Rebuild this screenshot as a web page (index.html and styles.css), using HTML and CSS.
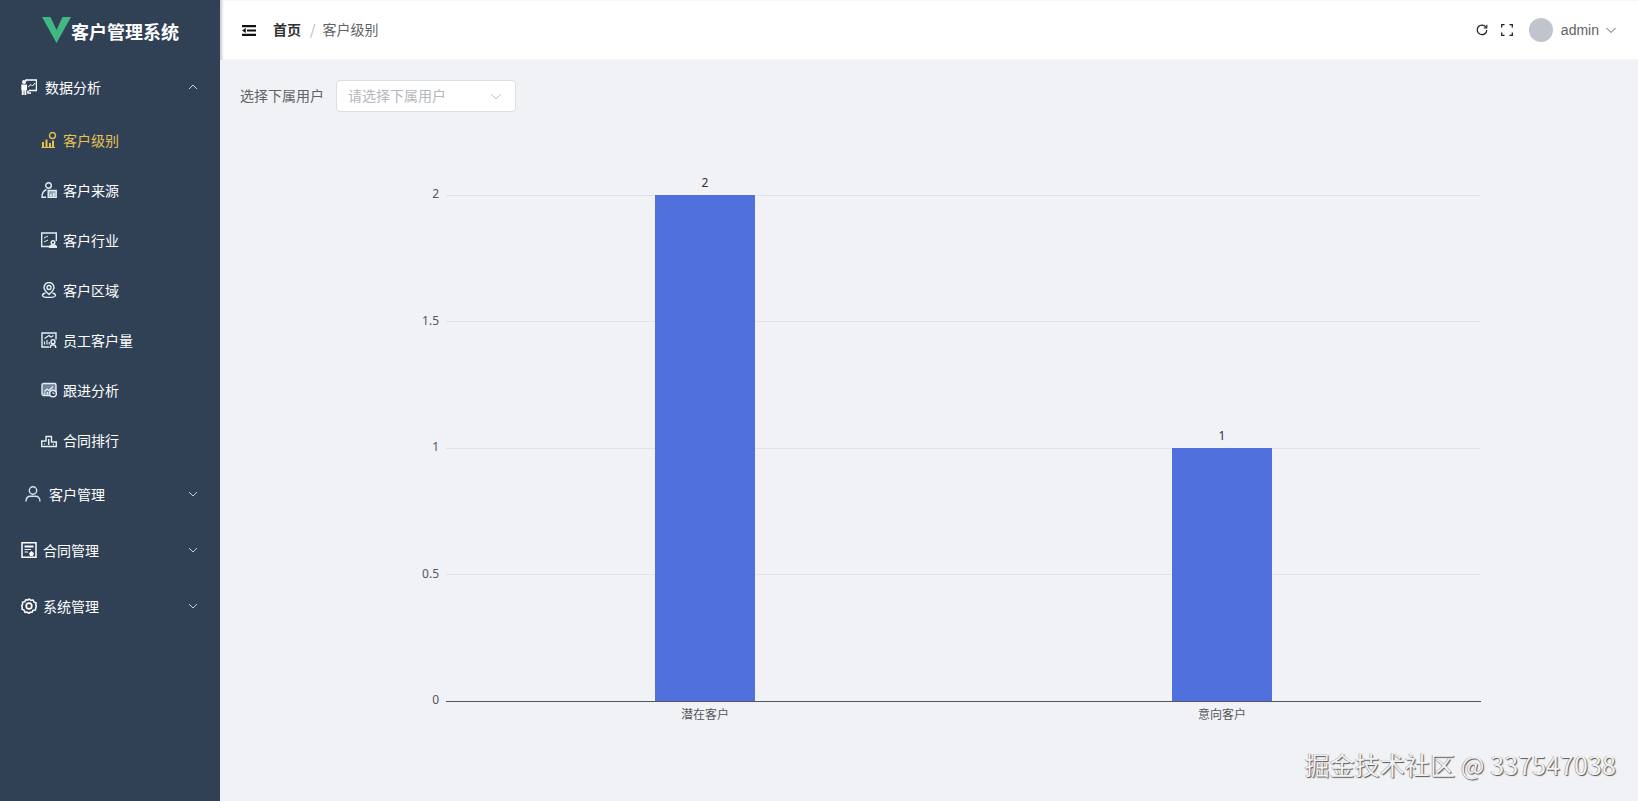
FILE: index.html
```html
<!DOCTYPE html>
<html lang="zh">
<head>
<meta charset="utf-8">
<title>客户级别</title>
<link rel="stylesheet" href="styles.css">
</head>
<body>
<div class="app">
  <aside class="sidebar">
    <div class="logo">
      <svg class="logo-mark" viewBox="0 0 29 26"><path d="M0 0H8.500L14.500 13 20.500 0H29L14.500 26Z" fill="#41b883"/></svg>
      <span class="logo-text">客户管理系统</span>
    </div>
    <nav class="menu">
      <div class="menu-row">
        <svg class="ico ico-lg" viewBox="0 0 16 16"><path d="M5 2.500V1H15.500V11.500H8M7 11.500V14H10" fill="none" stroke="#fff" stroke-width="1.500"/><path d="M7 8 10 5.500 11.500 7 14 4" fill="none" stroke="#fff" stroke-width="1"/><circle cx="3" cy="3" r="2" fill="#fff"/><path d="M.3 5.500H6V11H5.300V16.500H3.400V11.500H2.700V16.500H.8V11H.3Z" fill="#fff"/></svg>
        <span class="menu-label">数据分析</span>
        <svg class="chev" viewBox="0 0 12 12"><path d="M2 8 6 4 10 8"/></svg>
      </div>
      <div class="sub-row active">
        <svg class="ico" viewBox="0 0 16 16" fill="none" stroke="#e8c04f"><circle cx="11.500" cy="3.500" r="3"/><path d="M.5 15.500H14" stroke-width="1.200"/><path d="M2 15V10M5.500 15V7.500M9 15V11M12 15V8.500" stroke-width="2"/></svg>
        <span>客户级别</span>
      </div>
      <div class="sub-row">
        <svg class="ico" viewBox="0 0 16 16" fill="none" stroke="#e4eef2"><circle cx="7.500" cy="3.500" r="2.800"/><path d="M5.500 7.500C2.500 8.500 1 11 1 15.200H5"/><rect x="7.200" y="8.500" width="8" height="7" fill="#8fa5b5"/><path d="M10 14.500V12M12.800 14.500V11" stroke-width="1.500"/></svg>
        <span>客户来源</span>
      </div>
      <div class="sub-row">
        <svg class="ico" viewBox="0 0 16 16" fill="none" stroke="#e4eef2"><path d="M8 14.500H.7V1H15.300V9"/><path d="M3 6 7 4M3 10 7 8" stroke-width="1"/><circle cx="12" cy="10.500" r="1.800"/><path d="M8.500 15.500C8.500 13.500 10 13 12 13S15.500 13.500 15.500 15.500Z" fill="#e4eef2"/></svg>
        <span>客户行业</span>
      </div>
      <div class="sub-row">
        <svg class="ico" viewBox="0 0 16 16" fill="none" stroke="#e4eef2"><path d="M8 12.500C5 9.800 3 8 3 5.500A5 5 0 0 1 13 5.500C13 8 11 9.800 8 12.500Z"/><circle cx="8" cy="5.500" r="2"/><path d="M4.500 11C2.800 11.500 1.500 12.300 1.500 13.300 1.500 14.600 4.500 15.500 8 15.500S14.500 14.600 14.500 13.300C14.500 12.300 13.200 11.500 11.500 11"/></svg>
        <span>客户区域</span>
      </div>
      <div class="sub-row">
        <svg class="ico" viewBox="0 0 16 16" fill="none" stroke="#e4eef2"><path d="M8 15H1V1H15V7.500"/><path d="M3.500 12.500V9.500M6 12.500V8M8.200 12.500V10M3.500 6.500 8 3.500 10 5 12.500 3.500" stroke-width="1.200"/><circle cx="12" cy="9.800" r="2"/><path d="M9.200 16C9.200 13.500 10.500 12.800 12 12.800S14.800 13.500 14.800 16"/></svg>
        <span>员工客户量</span>
      </div>
      <div class="sub-row">
        <svg class="ico" viewBox="0 0 16 16" fill="none" stroke="#e4eef2"><rect x="1" y="1.500" width="14" height="12" rx="1.500" fill="#6f8598"/><path d="M3.500 9.500 6 7 8 8.500 12 4.500" stroke-width="1.300"/><path d="M3.500 12.500V10.500M6.500 12.500V10" stroke-width="1.500"/><circle cx="12" cy="11.500" r="3.300" fill="#304156"/><path d="M12 9.800V11.600H13.500" stroke-width="1"/></svg>
        <span>跟进分析</span>
      </div>
      <div class="sub-row">
        <svg class="ico" viewBox="0 0 16 16" fill="none" stroke="#e4eef2"><path d="M.7 14.500V9H5V4.500H10.500V10H15.300V14.500Z"/><path d="M7.700 7V13M3 12H3.800M12 12.500H13" stroke-width="1.500"/></svg>
        <span>合同排行</span>
      </div>
      <div class="menu-row indent">
        <svg class="ico ico-user" viewBox="0 0 16 16" fill="none" stroke="#dbe3ea" stroke-width="1.200"><circle cx="8" cy="4.500" r="3.700"/><path d="M1 15.500C1 11.800 3 10.300 5.500 10.300H10.500C13 10.300 15 11.800 15 15.500"/></svg>
        <span class="menu-label">客户管理</span>
        <svg class="chev" viewBox="0 0 12 12"><path d="M2 4 6 8 10 4"/></svg>
      </div>
      <div class="menu-row sys">
        <svg class="ico ico-lg" viewBox="0 0 16 16"><path d="M1 .7H15V15.300H1Z" fill="none" stroke="#fff" stroke-width="1.500"/><path d="M3.500 3.500H12.500V5.500H3.500ZM3.500 7H10V8H3.500ZM3.500 9.500H7V10.500H3.500ZM10.500 9 13 11.300 12 14H9L8 11.300Z" fill="#fff"/></svg>
        <span class="menu-label">合同管理</span>
        <svg class="chev" viewBox="0 0 12 12"><path d="M2 4 6 8 10 4"/></svg>
      </div>
      <div class="menu-row sys">
        <svg class="ico ico-lg" viewBox="0 0 16 16" fill="none" stroke="#fff"><path d="M8 .9 9.800 2.300 12 1.900 13 4 15.100 5 14.700 7.100 15.500 8 14.700 10.100 14.500 11.900 12 12.300 11 14.300 8.900 14.300 8 15.500 6.200 14.100 4 14.500 3 12 1.100 11.400 1.300 9.300.5 8 1.600 6.300 1.500 4.300 3.700 3.800 4.700 1.800 7 2Z" stroke-width="1.500" stroke-linejoin="round"/><circle cx="8" cy="8" r="2.800" stroke-width="1.700"/></svg>
        <span class="menu-label">系统管理</span>
        <svg class="chev" viewBox="0 0 12 12"><path d="M2 4 6 8 10 4"/></svg>
      </div>
    </nav>
  </aside>
  <main class="main">
    <header class="topbar">
      <svg class="tb-fold" viewBox="0 0 14 11"><path d="M0 0H14V2.200H0ZM5 4.400H14V6.600H5ZM0 8.800H14V11H0ZM0 5.500 3.800 3V8Z" fill="#111"/></svg>
      <span class="crumb-home">首页</span>
      <span class="crumb-sep">/</span>
      <span class="crumb-cur">客户级别</span>
      <div class="tb-right">
        <svg class="tb-ico" viewBox="0 0 12 12" fill="none" stroke="#222" stroke-width="1.300"><path d="M10.300 3.700A4.800 4.800 0 1 0 10.800 6"/><path d="M10.800 .8V4H7.700" stroke-width="1.100"/></svg>
        <svg class="tb-ico tb-full" viewBox="0 0 12 12" fill="none" stroke="#222" stroke-width="1.300"><path d="M.7 3.500V.7H3.500M8.500 .7H11.300V3.500M11.300 8.500V11.300H8.500M3.500 11.300H.7V8.500"/></svg>
        <span class="avatar"></span>
        <span class="user-name">admin</span>
        <svg class="user-chev" viewBox="0 0 12 12"><path d="M1.500 4 6 8.500 10.500 4"/></svg>
      </div>
    </header>
    <section class="content">
      <div class="filter">
        <label class="filter-label">选择下属用户</label>
        <div class="select">
          <span class="placeholder">请选择下属用户</span>
          <svg class="select-chev" viewBox="0 0 12 12"><path d="M1 4 6 9 11 4"/></svg>
        </div>
      </div>
      <svg class="chart" viewBox="0 0 1418 681" width="1418" height="681">
        <g class="grid">
          <line x1="226" x2="1260" y1="75.500" y2="75.500"/>
          <line x1="226" x2="1260" y1="201.500" y2="201.500"/>
          <line x1="226" x2="1260" y1="328.500" y2="328.500"/>
          <line x1="226" x2="1260" y1="454.500" y2="454.500"/>
        </g>
        <rect class="bar" x="435" y="75" width="100" height="506"/>
        <rect class="bar" x="952" y="328" width="100" height="253"/>
        <line class="axis" x1="226" x2="1261" y1="581.500" y2="581.500"/>
        <g class="y-labels">
          <text x="219" y="78">2</text>
          <text x="219" y="205">1.5</text>
          <text x="219" y="331">1</text>
          <text x="219" y="458">0.5</text>
          <text x="219" y="584">0</text>
        </g>
        <g class="val-labels">
          <text x="485" y="67">2</text>
          <text x="1002" y="320">1</text>
        </g>
        <g class="x-labels">
          <text x="485" y="599">潜在客户</text>
          <text x="1002" y="599">意向客户</text>
        </g>
      </svg>
    </section>
  </main>
</div>
<div class="watermark">掘金技术社区 @ 337547038</div>
</body>
</html>
```
FILE: styles.css
```css
* { box-sizing: border-box; }
html, body { margin: 0; height: 100%; overflow: hidden; }
body {
  font-family: "Noto Sans CJK SC", "Noto Sans", sans-serif;
  font-size: 14px;
  color: #333;
  background: #f0f2f5;
}
.app { display: flex; height: 801px; }

.sidebar { flex: 0 0 220px; background: #304156; color: #fff; }
.logo {
  height: 60px;
  display: flex;
  align-items: center;
  padding-left: 42px;
}
.logo-mark { width: 29px; height: 26px; flex: none; }
.logo-text { font-size: 18px; font-weight: 700; margin-top: 2px; line-height: 24px; }

.menu { display: flex; flex-direction: column; margin-top: -1px; }
.menu-row {
  height: 56px;
  display: flex;
  align-items: center;
  padding-left: 21px;
  padding-right: 21px;
  color: #fff;
}
.sub-row {
  height: 50px;
  display: flex;
  align-items: center;
  padding-left: 41px;
  color: #fff;
}
.menu-row.indent { padding-left: 25px; margin-top: 1px; }
.menu-label { flex: 1; margin-left: 8px; line-height: 20px; }
.sys .menu-label { margin-left: 6px; }
.sub-row.active { color: #e9c14f; }
.ico { width: 16px; height: 16px; flex: none; margin-right: 6px; stroke-width: 1.400; }
.ico-lg { margin-right: 0; }
.ico-user { margin-right: 0; }
.chev { width: 12px; height: 12px; flex: none; fill: none; stroke: #c9d2dc; stroke-width: 1; }

.main { flex: 1; min-width: 0; display: flex; flex-direction: column; }
.topbar {
  height: 60px;
  background: #fff;
  display: flex;
  align-items: center;
  padding-left: 22px;
  padding-right: 21px;
  box-shadow: inset 3px 0 3px -1px rgba(0, 21, 41, .22);
  flex: none;
}
.tb-fold { width: 14px; height: 11px; flex: none; margin-right: 17px; }
.crumb-home { font-weight: 700; color: #303133; margin-top: -2px; }
.crumb-sep { color: #b4b7bd; margin: -2px 7px 0 9px; }
.crumb-cur { color: #5f6266; margin-top: -2px; }
.tb-right { margin-left: auto; display: flex; align-items: center; }
.tb-ico { width: 12px; height: 12px; flex: none; }
.tb-full { margin-left: 13px; }
.avatar { width: 24px; height: 24px; border-radius: 50%; background: #c0c4cc; margin-left: 16px; flex: none; }
.user-name { font-family: "Liberation Sans", sans-serif; font-size: 14px; color: #5f6266; margin-left: 8px; }
.user-chev { width: 12px; height: 12px; margin-left: 6px; fill: none; stroke: #5f6266; stroke-width: 1; }

.content { flex: 1; min-height: 0; padding-top: 20px; }
.filter { display: flex; align-items: center; padding-left: 20px; height: 32px; }
.filter-label { font-size: 14px; color: #5f6266; margin-right: 12px; margin-top: -3px; }
.select {
  width: 180px;
  height: 32px;
  background: #fff;
  border: 1px solid #dcdfe6;
  border-radius: 4px;
  display: flex;
  align-items: center;
  padding: 0 13px 0 11px;
}
.placeholder { font-size: 14px; color: #b4b7bd; flex: 1; margin-top: -3px; }
.select-chev { width: 12px; height: 12px; fill: none; stroke: #c0c4cc; stroke-width: 1; }

.chart { display: block; margin-top: 8px; }
.grid line { stroke: #dfe2ea; stroke-width: 1; }
.bar { fill: #5070dd; }
.axis { stroke: #54555a; stroke-width: 1; }
.chart text { font-family: "Noto Sans", "Noto Sans CJK SC", sans-serif; font-size: 12px; fill: #55565a; }
.y-labels text { text-anchor: end; }
.val-labels text { text-anchor: middle; fill: #333; }
.x-labels text { text-anchor: middle; font-family: "Noto Sans CJK SC", sans-serif; }

.watermark {
  position: absolute;
  right: 22px;
  bottom: 22px;
  font-size: 25px;
  letter-spacing: .1px;
  line-height: 30px;
  color: #f0f2f5;
  font-family: "Noto Sans CJK SC", sans-serif;
  text-shadow: 1px 1px 1px #55565a, -.5px -.5px 0 #8a8c90;
  white-space: nowrap;
}
```
